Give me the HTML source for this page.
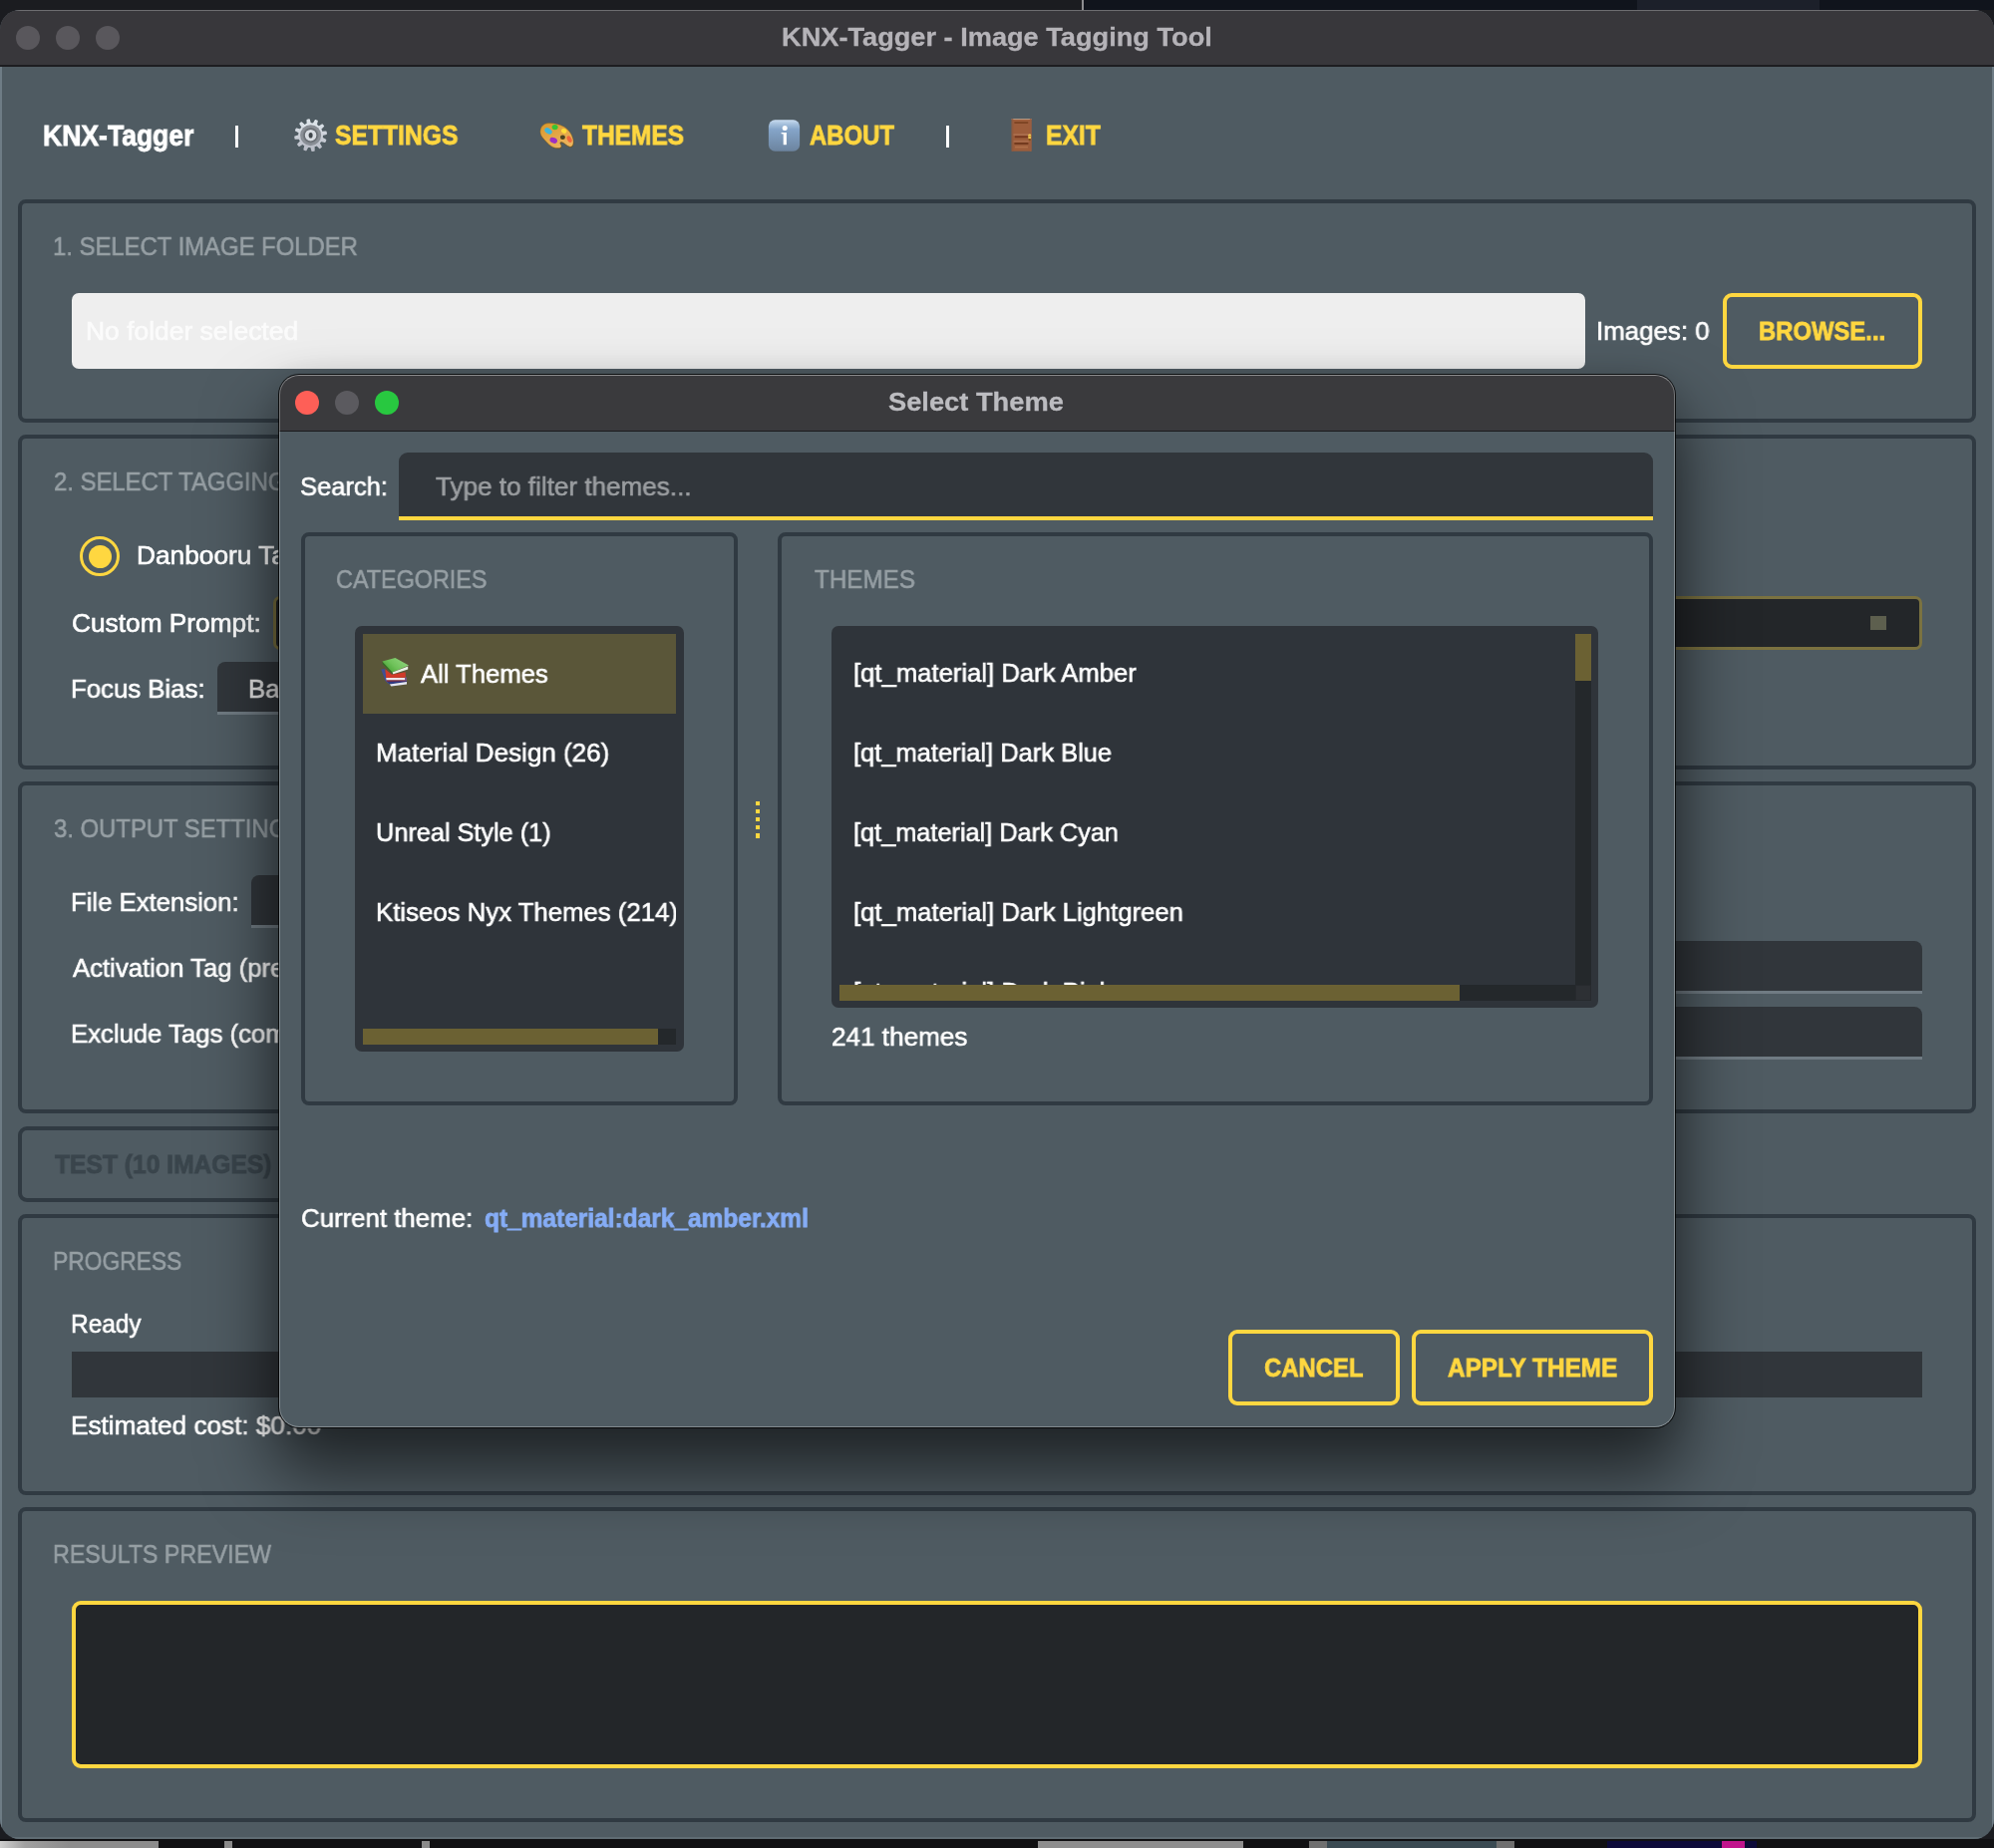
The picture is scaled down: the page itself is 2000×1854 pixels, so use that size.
<!DOCTYPE html><html><head><meta charset="utf-8"><title>KNX-Tagger - Image Tagging Tool</title><style>
*{box-sizing:border-box;margin:0;padding:0}
html,body{width:2000px;height:1854px;overflow:hidden;background:#1b1c20}
body{position:relative;font-family:"Liberation Sans",sans-serif}
.a{position:absolute}
.t{position:absolute;white-space:nowrap;transform-origin:0 0;will-change:transform;font-family:"Liberation Sans",sans-serif}
.gb{position:absolute;border:4px solid #303a42;border-radius:8px}
.btn{position:absolute;border:4px solid #ffd740;border-radius:9px}
.tl{position:absolute;width:24px;height:24px;border-radius:50%}
.in{position:absolute;background:#31363b;border-radius:8px 8px 0 0;border-bottom:3px solid #707b83}
</style></head><body>
<div class="a" style="left:1087px;top:0px;width:913px;height:10px;background:#10141c"></div>
<div class="a" style="left:1642px;top:0px;width:183px;height:10px;background:#1c202a"></div>
<div class="a" style="left:1085px;top:0px;width:2px;height:10px;background:#8d8d90"></div>
<div class="a" style="left:0px;top:1845px;width:2000px;height:9px;background:#111113"></div>
<div class="a" style="left:0px;top:1847px;width:159px;height:7px;background:linear-gradient(90deg,#cfcfcf 0,#a0a0a0 25px,#8c8c8c 70px)"></div>
<div class="a" style="left:225px;top:1847px;width:8px;height:7px;background:#8a8a8a"></div>
<div class="a" style="left:423px;top:1847px;width:8px;height:7px;background:#8a8a8a"></div>
<div class="a" style="left:1041px;top:1847px;width:206px;height:7px;background:#8e8e8e"></div>
<div class="a" style="left:1313px;top:1847px;width:206px;height:7px;background:#6f6f6f"></div>
<div class="a" style="left:1331px;top:1847px;width:170px;height:7px;background:#3a4a52"></div>
<div class="a" style="left:1612px;top:1847px;width:150px;height:7px;background:#0d0b3a"></div>
<div class="a" style="left:1727px;top:1847px;width:23px;height:7px;background:#c0148c"></div>
<div class="a" style="left:0;top:10px;width:2000px;height:1835px;border-radius:20px;background:#4f5b62;overflow:hidden">
<div class="a" style="left:0;top:0;width:2000px;height:55px;background:#38373b;box-shadow:inset 0 1px 0 rgba(255,255,255,.27)"></div>
<div class="a" style="left:0;top:55px;width:2000px;height:2px;background:#1d1d20"></div>
<div class="a" style="left:0;top:57px;width:2px;height:1800px;background:#6e7c85"></div>
<div class="a" style="left:1998px;top:57px;width:2px;height:1800px;background:#6e7c85"></div>
<div class="a" style="left:0;top:1833px;width:2000px;height:2px;background:#5f6c73"></div>
</div>
<div class="tl" style="left:16px;top:26px;background:#59575c"></div>
<div class="tl" style="left:56px;top:26px;background:#59575c"></div>
<div class="tl" style="left:96px;top:26px;background:#59575c"></div>
<div class="a" style="left:235.5px;top:126px;width:3px;height:22px;background:#fff"></div>
<div class="a" style="left:949px;top:126px;width:3px;height:22px;background:#fff"></div>
<svg class="a" style="left:286px;top:110px" width="50" height="50" viewBox="0 0 50 50">
<defs><linearGradient id="gg" x1="0" y1="0" x2="0" y2="1"><stop offset="0" stop-color="#dfe6ec"/><stop offset="1" stop-color="#b9bcc6"/></linearGradient>
<radialGradient id="gr" cx="0.5" cy="0.5" r="0.5"><stop offset="0.55" stop-color="#5d6268"/><stop offset="0.8" stop-color="#8b9097"/><stop offset="1" stop-color="#878c94"/></radialGradient></defs>
<path d="M22.37,14.56 L22.22,10.37 L24.08,10.07 L25.23,14.11 L28.38,14.44 L30.34,10.73 L32.10,11.41 L31.08,15.47 L33.64,17.33 L37.19,15.11 L38.37,16.57 L35.46,19.58 L36.74,22.47 L40.93,22.32 L41.23,24.18 L37.19,25.33 L36.86,28.48 L40.57,30.44 L39.89,32.20 L35.83,31.18 L33.97,33.74 L36.19,37.29 L34.73,38.47 L31.72,35.56 L28.83,36.84 L28.98,41.03 L27.12,41.33 L25.97,37.29 L22.82,36.96 L20.86,40.67 L19.10,39.99 L20.12,35.93 L17.56,34.07 L14.01,36.29 L12.83,34.83 L15.74,31.82 L14.46,28.93 L10.27,29.08 L9.97,27.22 L14.01,26.07 L14.34,22.92 L10.63,20.96 L11.31,19.20 L15.37,20.22 L17.23,17.66 L15.01,14.11 L16.47,12.93 L19.48,15.84Z" fill="url(#gg)" stroke="url(#gg)" stroke-width="1.5" stroke-linejoin="round"/>
<circle cx="25.6" cy="25.7" r="12.1" fill="url(#gg)"/>
<circle cx="25.6" cy="25.7" r="10.5" fill="url(#gr)"/>
<circle cx="25.6" cy="25.7" r="5.8" fill="#d9dde3"/>
<ellipse cx="25.6" cy="25.7" rx="2" ry="2.8" fill="#3e444a"/>
</svg>
<svg class="a" style="left:534px;top:110px" width="50" height="50" viewBox="0 0 50 50">
<defs><linearGradient id="pg" x1="0" y1="0" x2="0.6" y2="1"><stop offset="0" stop-color="#d9972a"/><stop offset="1" stop-color="#ebb45e"/></linearGradient></defs>
<path transform="translate(0.3,0.7)" d="M7.9,23 C7.6,17.5 11,14 16,13.6 C21,13.2 27,14.6 31.5,17 C36,19.6 39.5,24 40.8,29.5 C41.8,34 40.5,37.6 37.6,37.2 C34.5,36.6 32.5,33.4 29.6,32.6 C27.6,32.2 27.4,33.6 28.4,35 C29.6,36.8 29,38.4 26,38.6 C21.5,38.8 17.4,36 14.2,32.4 C11,29 8.2,26.4 7.9,23Z" fill="#6b4c14" fill-opacity="0.75"/>
<path d="M7.9,23 C7.6,17.5 11,14 16,13.6 C21,13.2 27,14.6 31.5,17 C36,19.6 39.5,24 40.8,29.5 C41.8,34 40.5,37.6 37.6,37.2 C34.5,36.6 32.5,33.4 29.6,32.6 C27.6,32.2 27.4,33.6 28.4,35 C29.6,36.8 29,38.4 26,38.6 C21.5,38.8 17.4,36 14.2,32.4 C11,29 8.2,26.4 7.9,23Z" fill="url(#pg)" stroke="#7a5a1a" stroke-opacity="0.55" stroke-width="0.7"/>
<ellipse cx="30.4" cy="27.7" rx="2.5" ry="2.3" fill="#4d4320"/>
<ellipse cx="16" cy="21.4" rx="4.1" ry="2.7" transform="rotate(35 16 21.4)" fill="#3fb5da"/>
<ellipse cx="22.6" cy="17.6" rx="3" ry="2.7" fill="#37c433"/>
<ellipse cx="31.7" cy="21.4" rx="2.8" ry="2.3" transform="rotate(25 31.7 21.4)" fill="#ffdc3a"/>
<ellipse cx="37.1" cy="29.6" rx="2.1" ry="3.5" transform="rotate(-30 37.1 29.6)" fill="#f0653d"/>
<ellipse cx="21.2" cy="30.8" rx="3.9" ry="2.7" transform="rotate(25 21.2 30.8)" fill="#9c30c2"/>
</svg>
<svg class="a" style="left:762px;top:110px" width="50" height="50" viewBox="0 0 50 50">
<defs><linearGradient id="ig" x1="0" y1="0" x2="0" y2="1"><stop offset="0" stop-color="#c9dcf0"/><stop offset="0.12" stop-color="#a9c3de"/><stop offset="0.3" stop-color="#85a5c9"/><stop offset="1" stop-color="#6c849f"/></linearGradient></defs>
<rect x="8.9" y="10.3" width="31.2" height="31.4" rx="6.5" fill="url(#ig)"/>
<circle cx="25.2" cy="18.4" r="2.5" fill="#ffffff"/>
<path d="M21.6,22.9 L26.9,22.9 L26.9,35.3 L23.7,35.3 L23.7,24.6 L21.6,24.2Z" fill="#ffffff"/>
</svg>
<svg class="a" style="left:1000px;top:110px" width="50" height="50" viewBox="0 0 50 50">
<rect x="14.7" y="9.2" width="19.8" height="32.5" fill="#9d5d3b"/>
<rect x="14.7" y="9" width="19.8" height="1" fill="#b59883"/>
<rect x="14.7" y="9.2" width="1.6" height="32.5" fill="#8f5a3e"/>
<rect x="32.9" y="9.2" width="1.6" height="32.5" fill="#9a5e40"/>
<rect x="17.4" y="12.2" width="13.8" height="1.7" fill="#7a4222"/>
<rect x="16.5" y="24.2" width="15" height="1.8" fill="#ab6e4e"/>
<rect x="17.8" y="26.3" width="13.4" height="2" fill="#76381f"/>
<rect x="16.5" y="31" width="15.4" height="1.6" fill="#a96b4b"/>
<rect x="17.4" y="33" width="14" height="2" fill="#733a1e"/>
<rect x="18" y="36.8" width="13" height="1.6" fill="#b0714a"/>
<rect x="31.3" y="24.6" width="2.8" height="4.6" rx="1" fill="#f3cd58"/>
<rect x="31.3" y="26.5" width="2.8" height="0.7" fill="#a27518"/>
<rect x="31.8" y="29" width="1.8" height="2" fill="#7d5410"/>
</svg>
<div class="gb" style="left:18px;top:200px;width:1964px;height:224px;"></div>
<div class="a" style="left:72px;top:294px;width:1518px;height:76px;background:#eeeeee;border-radius:7px"></div>
<div class="btn" style="left:1728px;top:294px;width:200px;height:76px;"></div>
<div class="gb" style="left:18px;top:436px;width:1964px;height:336px;"></div>
<div class="a" style="left:80px;top:538px;width:40px;height:40px;border:3.2px solid #ffd740;border-radius:50%"></div>
<div class="a" style="left:88.5px;top:546.5px;width:23px;height:23px;background:#ffd740;border-radius:50%"></div>
<div class="a" style="left:274px;top:598px;width:1654px;height:54px;background:#232629;border:3px solid #7b7240;border-radius:7px"></div>
<div class="a" style="left:1876px;top:618px;width:16px;height:14px;background:#5d5f4e"></div>
<div class="in" style="left:218px;top:664px;width:700px;height:53px;"></div>
<div class="gb" style="left:18px;top:784px;width:1964px;height:333px;"></div>
<div class="in" style="left:252px;top:878px;width:600px;height:53px;"></div>
<div class="in" style="left:350px;top:944px;width:1578px;height:53px;"></div>
<div class="in" style="left:420px;top:1010px;width:1508px;height:53px;"></div>
<div class="a" style="left:18px;top:1130px;width:640px;height:76px;border:4px solid #303a42;border-radius:9px"></div>
<div class="gb" style="left:18px;top:1218px;width:1964px;height:282px;"></div>
<div class="a" style="left:72px;top:1356px;width:1856px;height:46px;background:#31363b"></div>
<div class="gb" style="left:18px;top:1512px;width:1964px;height:316px;"></div>
<div class="a" style="left:72px;top:1606px;width:1856px;height:168px;background:#232629;border:4px solid #ffd740;border-radius:9px"></div>
<div class="t" style="left:783.98px;top:24px;font-size:26.6px;line-height:26.6px;height:26.6px;font-weight:700;color:#b5b3b8;-webkit-text-stroke:0.3px #b5b3b8;transform:scaleX(1.0220)">KNX-Tagger - Image Tagging Tool</div>
<div class="t" style="left:43.47px;top:122px;font-size:28.6px;line-height:28.6px;height:28.6px;font-weight:700;color:#ffffff;-webkit-text-stroke:0.8px #ffffff;transform:scaleX(0.9285)">KNX-Tagger</div>
<div class="t" style="left:336.00px;top:122px;font-size:27.8px;line-height:27.8px;height:27.8px;font-weight:700;color:#ffd740;-webkit-text-stroke:0.8px #ffd740;transform:scaleX(0.8884)">SETTINGS</div>
<div class="t" style="left:584.00px;top:122px;font-size:27.8px;line-height:27.8px;height:27.8px;font-weight:700;color:#ffd740;-webkit-text-stroke:0.8px #ffd740;transform:scaleX(0.8813)">THEMES</div>
<div class="t" style="left:812.00px;top:122px;font-size:27.8px;line-height:27.8px;height:27.8px;font-weight:700;color:#ffd740;-webkit-text-stroke:0.8px #ffd740;transform:scaleX(0.8599)">ABOUT</div>
<div class="t" style="left:1049.11px;top:122px;font-size:27.8px;line-height:27.8px;height:27.8px;font-weight:700;color:#ffd740;-webkit-text-stroke:0.8px #ffd740;transform:scaleX(0.8881)">EXIT</div>
<div class="t" style="left:52.70px;top:234px;font-size:26.5px;line-height:26.5px;height:26.5px;font-weight:400;color:#969fa4;-webkit-text-stroke:0.6px #969fa4;transform:scaleX(0.9005)">1. SELECT IMAGE FOLDER</div>
<div class="t" style="left:53.60px;top:470px;font-size:26.5px;line-height:26.5px;height:26.5px;font-weight:400;color:#969fa4;-webkit-text-stroke:0.6px #969fa4;transform:scaleX(0.9005)">2. SELECT TAGGING MODE</div>
<div class="t" style="left:53.60px;top:818px;font-size:26.5px;line-height:26.5px;height:26.5px;font-weight:400;color:#969fa4;-webkit-text-stroke:0.6px #969fa4;transform:scaleX(0.9005)">3. OUTPUT SETTINGS</div>
<div class="t" style="left:52.78px;top:1252px;font-size:26.5px;line-height:26.5px;height:26.5px;font-weight:400;color:#969fa4;-webkit-text-stroke:0.6px #969fa4;transform:scaleX(0.8609)">PROGRESS</div>
<div class="t" style="left:52.75px;top:1546px;font-size:26.5px;line-height:26.5px;height:26.5px;font-weight:400;color:#969fa4;-webkit-text-stroke:0.6px #969fa4;transform:scaleX(0.8768)">RESULTS PREVIEW</div>
<div class="t" style="left:86.48px;top:319px;font-size:26.2px;line-height:26.2px;height:26.2px;font-weight:400;color:#fbfbfb;-webkit-text-stroke:0.6px #fbfbfb;transform:scaleX(1.0096)">No folder selected</div>
<div class="t" style="left:1600.83px;top:319px;font-size:26.2px;line-height:26.2px;height:26.2px;font-weight:400;color:#ffffff;-webkit-text-stroke:0.6px #ffffff;transform:scaleX(0.9873)">Images: 0</div>
<div class="t" style="left:1764.09px;top:319px;font-size:26.3px;line-height:26.3px;height:26.3px;font-weight:700;color:#ffd740;-webkit-text-stroke:0.8px #ffd740;transform:scaleX(0.9061)">BROWSE...</div>
<div class="t" style="left:136.99px;top:544px;font-size:26.2px;line-height:26.2px;height:26.2px;font-weight:400;color:#ffffff;-webkit-text-stroke:0.6px #ffffff;transform:scaleX(1.0032)">Danbooru Tags</div>
<div class="t" style="left:71.80px;top:612px;font-size:26.2px;line-height:26.2px;height:26.2px;font-weight:400;color:#ffffff;-webkit-text-stroke:0.6px #ffffff;transform:scaleX(1.0032)">Custom Prompt:</div>
<div class="t" style="left:71.03px;top:678px;font-size:26.2px;line-height:26.2px;height:26.2px;font-weight:400;color:#ffffff;-webkit-text-stroke:0.6px #ffffff;transform:scaleX(0.9839)">Focus Bias:</div>
<div class="t" style="left:248.83px;top:678px;font-size:26.2px;line-height:26.2px;height:26.2px;font-weight:400;color:#e6e6e6;-webkit-text-stroke:0.6px #e6e6e6;transform:scaleX(0.9839)">Balanced</div>
<div class="t" style="left:71.04px;top:892px;font-size:26.2px;line-height:26.2px;height:26.2px;font-weight:400;color:#ffffff;-webkit-text-stroke:0.6px #ffffff;transform:scaleX(0.9816)">File Extension:</div>
<div class="t" style="left:72.60px;top:958px;font-size:26.2px;line-height:26.2px;height:26.2px;font-weight:400;color:#ffffff;-webkit-text-stroke:0.6px #ffffff;transform:scaleX(0.9816)">Activation Tag (prefix):</div>
<div class="t" style="left:71.04px;top:1024px;font-size:26.2px;line-height:26.2px;height:26.2px;font-weight:400;color:#ffffff;-webkit-text-stroke:0.6px #ffffff;transform:scaleX(0.9816)">Exclude Tags (comma-separated):</div>
<div class="t" style="left:54.80px;top:1155px;font-size:26.3px;line-height:26.3px;height:26.3px;font-weight:700;color:#3a454c;-webkit-text-stroke:0.8px #3a454c;transform:scaleX(0.9358)">TEST (10 IMAGES)</div>
<div class="t" style="left:70.93px;top:1315px;font-size:26.2px;line-height:26.2px;height:26.2px;font-weight:400;color:#ffffff;-webkit-text-stroke:0.6px #ffffff;transform:scaleX(0.9329)">Ready</div>
<div class="t" style="left:71.30px;top:1417px;font-size:26.2px;line-height:26.2px;height:26.2px;font-weight:400;color:#ffffff;-webkit-text-stroke:0.6px #ffffff;transform:scaleX(0.9978)">Estimated cost: $0.00</div>
<div class="a" style="left:280px;top:376px;width:1400px;height:1056px;border-radius:20px;background:#4f5b62;overflow:hidden;box-shadow:0 0 0 1px rgba(0,0,0,.82),0 41px 68px 6px rgba(0,0,0,.58),0 4px 30px 4px rgba(0,0,0,.09)">
<div class="a" style="left:0;top:0;width:1400px;height:56px;background:#3a3a3d"></div>
<div class="a" style="left:0;top:56px;width:1400px;height:1px;background:#1b1b1d"></div>
<div class="a" style="left:0;top:0;width:1400px;height:1056px;border-radius:20px;border:1.5px solid rgba(255,255,255,.3);border-top:1px solid rgba(255,255,255,.42)"></div>
</div>
<div class="tl" style="left:296px;top:392px;background:#fe5f57"></div>
<div class="tl" style="left:336px;top:392px;background:#5b5a5f"></div>
<div class="tl" style="left:376px;top:392px;background:#28c840"></div>
<div class="a" style="left:400px;top:454px;width:1258px;height:68px;background:#31363b;border-radius:9px 9px 0 0;border-bottom:4px solid #ffd740"></div>
<div class="gb" style="left:302px;top:534px;width:438px;height:575px;"></div>
<div class="a" style="left:356px;top:628px;width:330px;height:427px;background:#2f343a;border-radius:7px"></div>
<div class="a" style="left:364px;top:636px;width:314px;height:80px;background:#5a5639"></div>
<div class="a" style="left:364px;top:1032px;width:314px;height:16px;background:#24282b"></div>
<div class="a" style="left:364px;top:1032px;width:296px;height:16px;background:#6b6133"></div>
<div class="a" style="left:758px;top:804.0px;width:4.4px;height:4.2px;background:#ffd740"></div>
<div class="a" style="left:758px;top:812.1px;width:4.4px;height:4.2px;background:#ffd740"></div>
<div class="a" style="left:758px;top:820.2px;width:4.4px;height:4.2px;background:#ffd740"></div>
<div class="a" style="left:758px;top:828.3px;width:4.4px;height:4.2px;background:#ffd740"></div>
<div class="a" style="left:758px;top:836.4px;width:4.4px;height:4.2px;background:#ffd740"></div>
<div class="gb" style="left:780px;top:534px;width:878px;height:575px;"></div>
<div class="a" style="left:834px;top:628px;width:769px;height:383px;background:#2f343a;border-radius:7px"></div>
<svg class="a" style="left:372px;top:650px" width="50" height="50" viewBox="0 0 50 50">
<defs><linearGradient id="bg1" x1="0" y1="0.8" x2="1" y2="0.2"><stop offset="0" stop-color="#3f9e2e"/><stop offset="0.45" stop-color="#6fc25a"/><stop offset="1" stop-color="#93d680"/></linearGradient></defs>
<path d="M10.2,21.5 L14.2,21 L16.5,33.5 L19,37.5 L14.5,33Z" fill="#3f4f95"/>
<path d="M16.2,33.6 L36,32.8 L36,34.3 L19,36.6Z" fill="#2f3a82"/>
<path d="M18.8,36.4 L36,34.1 L36,36.4 L20.4,38.5Z" fill="#e4e6f2"/>
<path d="M14.3,21.2 L21,26.8 L34.6,24.2 L35,29.8 L15.2,30Z" fill="#d13a2a"/>
<path d="M15.2,30 L34,30 L34,32.6 L15.6,32.6Z" fill="#f0e6ea"/>
<path d="M15.4,32.5 L34.6,32.5 L36,33.2 L16,33.7Z" fill="#8a2340"/>
<path d="M34,29.5 L35.8,29.5 L35.8,33 L34,32.6Z" fill="#7a5a8e"/>
<path d="M11.3,13.9 L21.5,24.4 L22.3,26.2 L11.8,16Z" fill="#237a1c"/>
<path d="M11.4,13.6 L24.4,9.9 L38,17.5 L21.6,24.4Z" fill="url(#bg1)"/>
<path d="M21.6,24.4 L37.2,18.4 L37.2,21.6 L22.4,26.2Z" fill="#e9f3e6"/>
</svg>
<div class="t" style="left:891.00px;top:390px;font-size:26.7px;line-height:26.7px;height:26.7px;font-weight:700;color:#bcbcc0;-webkit-text-stroke:0.3px #bcbcc0;transform:scaleX(1.0221)">Select Theme</div>
<div class="t" style="left:301.44px;top:475px;font-size:26.5px;line-height:26.5px;height:26.5px;font-weight:400;color:#ffffff;-webkit-text-stroke:0.6px #ffffff;transform:scaleX(0.9618)">Search:</div>
<div class="t" style="left:436.50px;top:475px;font-size:26.5px;line-height:26.5px;height:26.5px;font-weight:400;color:#9b9ea1;-webkit-text-stroke:0.6px #9b9ea1;transform:scaleX(0.9844)">Type to filter themes...</div>
<div class="t" style="left:337.12px;top:568px;font-size:26.5px;line-height:26.5px;height:26.5px;font-weight:400;color:#969fa4;-webkit-text-stroke:0.6px #969fa4;transform:scaleX(0.8818)">CATEGORIES</div>
<div class="t" style="left:816.60px;top:568px;font-size:26.5px;line-height:26.5px;height:26.5px;font-weight:400;color:#969fa4;-webkit-text-stroke:0.6px #969fa4;transform:scaleX(0.9148)">THEMES</div>
<div class="t" style="left:422.30px;top:663px;font-size:26.5px;line-height:26.5px;height:26.5px;font-weight:400;color:#ffffff;-webkit-text-stroke:0.6px #ffffff;transform:scaleX(0.9676)">All Themes</div>
<div class="t" style="left:376.84px;top:742px;font-size:26.5px;line-height:26.5px;height:26.5px;font-weight:400;color:#ffffff;-webkit-text-stroke:0.6px #ffffff;transform:scaleX(0.9819)">Material Design (26)</div>
<div class="t" style="left:376.89px;top:822px;font-size:26.5px;line-height:26.5px;height:26.5px;font-weight:400;color:#ffffff;-webkit-text-stroke:0.6px #ffffff;transform:scaleX(0.9539)">Unreal Style (1)</div>
<div class="t" style="left:856.43px;top:662px;font-size:26.5px;line-height:26.5px;height:26.5px;font-weight:400;color:#ffffff;-webkit-text-stroke:0.6px #ffffff;transform:scaleX(0.9683)">[qt_material] Dark Amber</div>
<div class="t" style="left:856.44px;top:742px;font-size:26.5px;line-height:26.5px;height:26.5px;font-weight:400;color:#ffffff;-webkit-text-stroke:0.6px #ffffff;transform:scaleX(0.9612)">[qt_material] Dark Blue</div>
<div class="t" style="left:856.44px;top:822px;font-size:26.5px;line-height:26.5px;height:26.5px;font-weight:400;color:#ffffff;-webkit-text-stroke:0.6px #ffffff;transform:scaleX(0.9551)">[qt_material] Dark Cyan</div>
<div class="t" style="left:856.43px;top:902px;font-size:26.5px;line-height:26.5px;height:26.5px;font-weight:400;color:#ffffff;-webkit-text-stroke:0.6px #ffffff;transform:scaleX(0.9683)">[qt_material] Dark Lightgreen</div>
<div class="t" style="left:833.62px;top:1027px;font-size:26.5px;line-height:26.5px;height:26.5px;font-weight:400;color:#ffffff;-webkit-text-stroke:0.6px #ffffff;transform:scaleX(0.9845)">241 themes</div>
<div class="t" style="left:302.03px;top:1209px;font-size:26.5px;line-height:26.5px;height:26.5px;font-weight:400;color:#ffffff;-webkit-text-stroke:0.6px #ffffff;transform:scaleX(0.9736)">Current theme:</div>
<div class="t" style="left:485.68px;top:1209px;font-size:26.5px;line-height:26.5px;height:26.5px;font-weight:700;color:#86adf6;-webkit-text-stroke:0.8px #86adf6;transform:scaleX(0.9229)">qt_material:dark_amber.xml</div>
<div class="t" style="left:1267.70px;top:1359px;font-size:26.5px;line-height:26.5px;height:26.5px;font-weight:700;color:#ffd740;-webkit-text-stroke:0.8px #ffd740;transform:scaleX(0.9009)">CANCEL</div>
<div class="t" style="left:1452.00px;top:1359px;font-size:26.5px;line-height:26.5px;height:26.5px;font-weight:700;color:#ffd740;-webkit-text-stroke:0.8px #ffd740;transform:scaleX(0.9172)">APPLY THEME</div>
<div class="a" style="left:364px;top:880px;width:314px;height:80px;overflow:hidden">
<div class="t" style="left:12.86px;top:22px;font-size:26.5px;line-height:26.5px;height:26.5px;font-weight:400;color:#ffffff;-webkit-text-stroke:0.6px #ffffff;transform:scaleX(0.9716)">Ktiseos Nyx Themes (214)</div>
</div>
<div class="a" style="left:842px;top:956px;width:738px;height:32px;overflow:hidden">
<div class="t" style="left:14.43px;top:26px;font-size:26.5px;line-height:26.5px;height:26.5px;font-weight:400;color:#ffffff;-webkit-text-stroke:0.6px #ffffff;transform:scaleX(0.9683)">[qt_material] Dark Pink</div>
</div>
<div class="a" style="left:1580px;top:636px;width:16px;height:352px;background:#24282b"></div>
<div class="a" style="left:1580px;top:636px;width:16px;height:47px;background:#6b6133"></div>
<div class="a" style="left:842px;top:988px;width:738px;height:16px;background:#24282b"></div>
<div class="a" style="left:842px;top:988px;width:622px;height:16px;background:#6b6133"></div>
<div class="a" style="left:1580px;top:988px;width:16px;height:16px;background:#2d3034;border:1px solid #272a2e"></div>
<div class="btn" style="left:1232px;top:1334px;width:172px;height:76px;"></div>
<div class="btn" style="left:1416px;top:1334px;width:242px;height:76px;"></div>
</body></html>
